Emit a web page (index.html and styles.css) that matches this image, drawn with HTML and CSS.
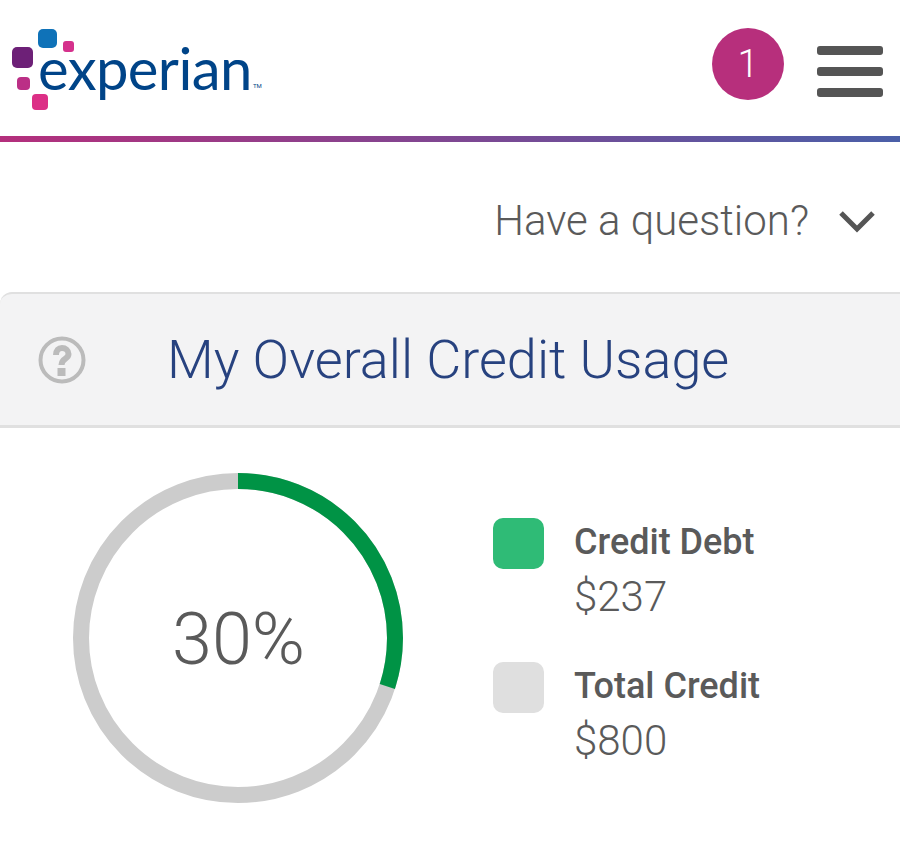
FILE: index.html
```html
<!DOCTYPE html>
<html lang="en">
<head>
<meta charset="utf-8">
<title>My Overall Credit Usage</title>
<link rel="stylesheet" href="styles.css">
</head>
<body>
<header class="top">
  <div class="logo">
    <svg class="logo-marks" width="60" height="90" viewBox="0 0 60 90" aria-hidden="true">
      <rect x="26" y="1" width="19" height="19" rx="5" fill="#0f72b8"/>
      <rect x="51" y="13" width="11" height="11" rx="3" fill="#d5318c"/>
      <rect x="0" y="19" width="21" height="21" rx="5" fill="#6d2077"/>
      <rect x="5" y="49" width="13" height="13" rx="4" fill="#bb2f86"/>
      <rect x="20" y="66" width="16" height="16" rx="4" fill="#dc2f86"/>
    </svg>
    <span class="logo-word">experian</span><span class="logo-tm">TM</span>
  </div>
  <div class="top-actions">
    <span class="badge">1</span>
    <div class="burger"><i></i><i></i><i></i></div>
  </div>
</header>
<div class="rule"></div>
<div class="question">
  <span>Have a question?</span>
  <svg width="38" height="24" viewBox="0 0 38 24" aria-hidden="true"><path d="M3 3 L19 19 L35 3" fill="none" stroke="#555" stroke-width="5"/></svg>
</div>
<section class="card">
  <div class="card-head">
    <svg class="help" width="48" height="48" viewBox="0 0 48 48" aria-hidden="true">
      <circle cx="24" cy="24" r="21.500" fill="none" stroke="#bbb" stroke-width="4"/>
      <path d="M18 19c0-4.500 2.500-7 6-7s6.500 2.500 6.500 6c0 5.500-7 4-7 11" fill="none" stroke="#bbb" stroke-width="6"/>
      <rect x="19.500" y="32" width="8" height="8" fill="#bbb"/>
    </svg>
    <h1>My Overall Credit Usage</h1>
  </div>
  <div class="card-body">
    <div class="ring">
      <svg width="330" height="330" viewBox="0 0 330 330" aria-hidden="true">
        <circle cx="165" cy="165" r="157" fill="none" stroke="#ccc" stroke-width="16"/>
        <circle cx="165" cy="165" r="157" fill="none" stroke="#009345" stroke-width="16" pathLength="100" stroke-dasharray="30 70" transform="rotate(-90 165 165)"/>
      </svg>
      <span class="pct">30%</span>
    </div>
    <div class="legend">
      <div class="item">
        <span class="swatch green"></span>
        <div><div class="name">Credit Debt</div><div class="amount">$237</div></div>
      </div>
      <div class="item">
        <span class="swatch grey"></span>
        <div><div class="name">Total Credit</div><div class="amount">$800</div></div>
      </div>
    </div>
  </div>
</section>
</body>
</html>
```
FILE: styles.css
```css
html, body { margin: 0; padding: 0; background: #fff; }
body { width: 900px; height: 844px; overflow: hidden; font-family: Roboto, "Liberation Sans", sans-serif; color: #5a5a5a; }
.top { height: 136px; display: flex; justify-content: space-between; align-items: flex-start; }
.logo { position: relative; width: 280px; height: 136px; }
.logo-marks { position: absolute; left: 12px; top: 28px; overflow: visible; }
.logo-word { position: absolute; left: 38px; top: 33px; font-family: Lato, sans-serif; font-size: 58px; line-height: 70px; color: #004488; letter-spacing: -0.6px; }
.logo-tm { position: absolute; left: 253px; top: 82px; font-family: Roboto, sans-serif; font-size: 6px; color: #004488; }
.top-actions { display: flex; align-items: flex-start; gap: 33px; padding: 28px 17px 0 0; }
.badge { width: 72px; height: 72px; border-radius: 50%; background: #b72f7c; color: #fff; font-size: 38px; font-weight: 300; display: flex; align-items: center; justify-content: center; }
.burger { width: 66px; display: flex; flex-direction: column; gap: 12px; margin-top: 18px; }
.burger i { display: block; height: 9px; border-radius: 3px; background: #555; }
.rule { height: 6px; background: linear-gradient(90deg, #b42f7c, #4a5fa8); }
.question { height: 150px; display: flex; align-items: flex-start; justify-content: flex-end; gap: 29px; padding-right: 24px; box-sizing: border-box; }
.question span { font-size: 42px; font-weight: 300; line-height: 47px; margin-top: 55px; }
.question svg { margin-top: 68px; }
.card-head { height: 136px; box-sizing: border-box; background: #f3f3f4; border-top: 2px solid #e0e0e0; border-bottom: 3px solid #e0e0e0; border-top-left-radius: 12px; display: flex; align-items: center; padding-left: 38px; }
.help { width: 48px; height: 48px; flex: none; }
h1 { margin: 0 0 0 81px; font-size: 54px; font-weight: 300; line-height: 60px; color: #27427f; white-space: nowrap; }
.card-body { display: flex; padding: 45px 0 0 73px; }
.ring { position: relative; width: 330px; height: 330px; flex: none; }
.ring svg { display: block; }
.pct { position: absolute; inset: 3px 0 0 1px; display: flex; align-items: center; justify-content: center; font-size: 72px; font-weight: 300; }
.legend { margin: 45px 0 0 90px; display: flex; flex-direction: column; gap: 34px; }
.item { display: flex; gap: 30px; align-items: flex-start; }
.swatch { width: 51px; height: 51px; border-radius: 10px; flex: none; }
.green { background: #2fbb76; }
.grey { background: #dfdfdf; }
.name { font-size: 36px; font-weight: 500; line-height: 48px; }
.amount { font-size: 42px; font-weight: 300; line-height: 62px; }
```
